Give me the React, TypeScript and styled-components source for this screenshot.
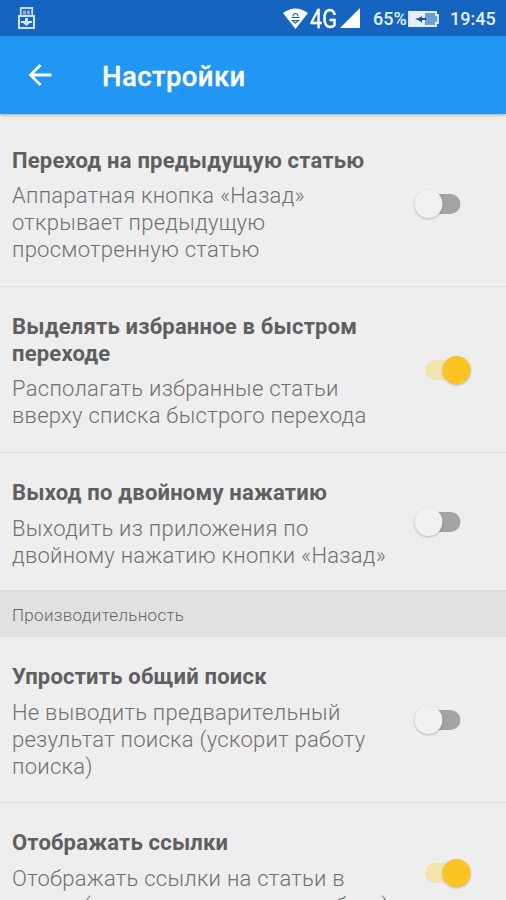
import React from 'react';
import styled, { createGlobalStyle } from 'styled-components';

const Global = createGlobalStyle`
  * { box-sizing: border-box; }
  body { margin: 0; background: #eeeeee; overflow: hidden; }
`;
const Screen = styled.div`
  width: 506px; height: 900px; overflow: hidden; display: flex; flex-direction: column;
  background: #eeeeee; font-family: Roboto, sans-serif; color: #606060;
`;
const StatusBar = styled.header`
  height: 36px; flex: none; background: #1565c0; color: #e6effa; display: flex; align-items: center;
  padding: 0 11px 0 18px; font-size: 18px; font-weight: 500;
`;
const Spacer = styled.div`flex: 1;`;
const StatusText = styled.span<{ $w: number }>`
  width: ${p => p.$w}px; margin-top: 1px; white-space: nowrap; font-weight: 500;
`;
const Network = styled.span`
  width: 28px; margin: 1px 2px 0 2px; font-size: 26px; line-height: 30px; font-weight: 400; color: #fff;
  -webkit-text-stroke: .4px #fff; transform: scaleX(.84); transform-origin: left center;
`;
const Signal = styled.svg`width: 21px; height: 21px; margin: 0 12px 0 0;`;
const Battery = styled.svg`width: 32px; height: 16px; margin: 1px 10px 0 1px;`;
const AppBar = styled.div`
  height: 78px; flex: none; background: #2196f3; color: #fff; display: flex; align-items: center;
  padding-left: 28px; gap: 50px; box-shadow: 0 1px 3px rgba(0,0,0,.3); z-index: 1;
`;
const Title = styled.h1`margin: 3px 0 0; font-size: 27.5px; line-height: 34px; font-weight: 500; letter-spacing: .4px; -webkit-text-stroke: .3px #fff;`;
const Row = styled.section<{ $h: number; $top: number }>`
  height: ${p => p.$h}px; flex: none; padding: ${p => p.$top}px 0 0 12px;
  border-bottom: 1px solid #dedede; display: flex; justify-content: space-between;
`;
const Copy = styled.div`width: 390px; white-space: nowrap;`;
const Heading = styled.h2<{ $gap: number }>`margin: 0 0 ${p => p.$gap}px; font-size: 22px; line-height: 27px; font-weight: 700; color: #5f5f5f; letter-spacing: .2px;`;
const Line = styled.span`display: block;`;
const Detail = styled.p`margin: 0; font-size: 22px; line-height: 27px; font-weight: 300; color: #707070; letter-spacing: .27px;`;
const ToggleArt = styled.svg<{ $top: number }>`width: 68px; height: 40px; margin: ${p => p.$top}px 27px 0 0; flex: none;`;
const Knob = styled.circle`filter: drop-shadow(0 1px 1px rgba(0,0,0,.25));`;
const Section = styled.div`height: 46px; flex: none; background: #e1e1e1; padding: 14px 12px; font-size: 17px; line-height: 21px; font-weight: 300; color: #646464; letter-spacing: .3px;`;

function Toggle({ on, top }: { on: boolean; top: number }) {
  return <ToggleArt $top={top} viewBox="0 0 68 40">
    <rect x={on ? 14 : 15} y="10" width="34.5" height="20" rx="10" fill={on ? '#f3e4ae' : '#a3a3a3'} />
    <Knob cx={on ? 45.5 : 17.5} cy="20" r="14" fill={on ? '#fbc422' : '#f0f0f0'} />
  </ToggleArt>;
}

const rows = [
  { h: 173, top: 33, gap: 8, t: 37, on: false, title: ['Переход на предыдущую статью'], text: ['Аппаратная кнопка «Назад»', 'открывает предыдущую', 'просмотренную статью'] },
  { h: 166, top: 26, gap: 8, t: 37, on: true, title: ['Выделять избранное в быстром', 'переходе'], text: ['Располагать избранные статьи', 'вверху списка быстрого перехода'] },
  { h: 138, top: 26, gap: 9, t: 23, on: false, title: ['Выход по двойному нажатию'], text: ['Выходить из приложения по', 'двойному нажатию кнопки «Назад»'] },
  { h: 166, top: 26, gap: 9, t: 37, on: false, title: ['Упростить общий поиск'], text: ['Не выводить предварительный', 'результат поиска (ускорит работу', 'поиска)'] },
  { h: 166, top: 26, gap: 9, t: 24, on: true, title: ['Отображать ссылки'], text: ['Отображать ссылки на статьи в', 'тексте (отключение ускорит работу)'] },
];

export default function App() {
  return <><Global /><Screen>
    <StatusBar>
      <svg width="17" height="22" viewBox="0 0 17 22">
        <path d="M2.8 9V1h11.4v8" fill="none" stroke="#c9daf2" strokeWidth="1.8" />
        <path d="M5 3.5h3v4H5zM9 3.5h3v4H9z" fill="#90b4e2" />
        <path d="M1 9h15v12H1z" fill="none" stroke="#d5e2f5" strokeWidth="2" />
        <path d="M7 11h3v3h4v2h-2l-3.5 3L5 16H3v-2h4z" fill="#d5e2f5" />
      </svg>
      <Spacer />
      <svg width="25" height="21" viewBox="0 0 25 21">
        <path d="M0 5Q12.5-4 25 5L12.5 21Z" fill="#fff" />
        <path d="M10 8.5q0-3 2.5-3t2.5 3M8.5 9.5h8M9.5 12.5h6l-3 2.5z" fill="none" stroke="#1565c0" strokeWidth="1.1" />
      </svg>
      <Network>4G</Network>
      <Signal viewBox="0 0 21 21"><path d="M20 0v20H0z" fill="#fff" /></Signal>
      <StatusText $w={34}>65%</StatusText>
      <Battery viewBox="0 0 32 16">
        <path d="M1 1h27v3h2v8h-2v3H1z" fill="#6f9dd9" stroke="#e6effa" strokeWidth="1.8" />
        <path d="M2 2h15v12H2z" fill="#e6effa" />
        <path d="M7 8l5-1.5L14 5v2h4v2h-4v3l-2-2z" fill="#1551a0" />
      </Battery>
      <StatusText $w={45}>19:45</StatusText>
    </StatusBar>
    <AppBar><svg width="24" height="24" viewBox="0 0 24 24" fill="none" stroke="#fff" strokeWidth="2.8"><path d="M23.5 12H3M12.5 2 2.5 12l10 10" /></svg><Title>Настройки</Title></AppBar>
    {rows.map((r, i) => <React.Fragment key={i}>
      {i === 3 && <Section>Производительность</Section>}
      <Row $h={r.h} $top={r.top}>
        <Copy><Heading $gap={r.gap}>{r.title.map(s => <Line key={s}>{s}</Line>)}</Heading><Detail>{r.text.map(s => <Line key={s}>{s}</Line>)}</Detail></Copy>
        <Toggle on={r.on} top={r.t} />
      </Row>
    </React.Fragment>)}
  </Screen></>;
}
